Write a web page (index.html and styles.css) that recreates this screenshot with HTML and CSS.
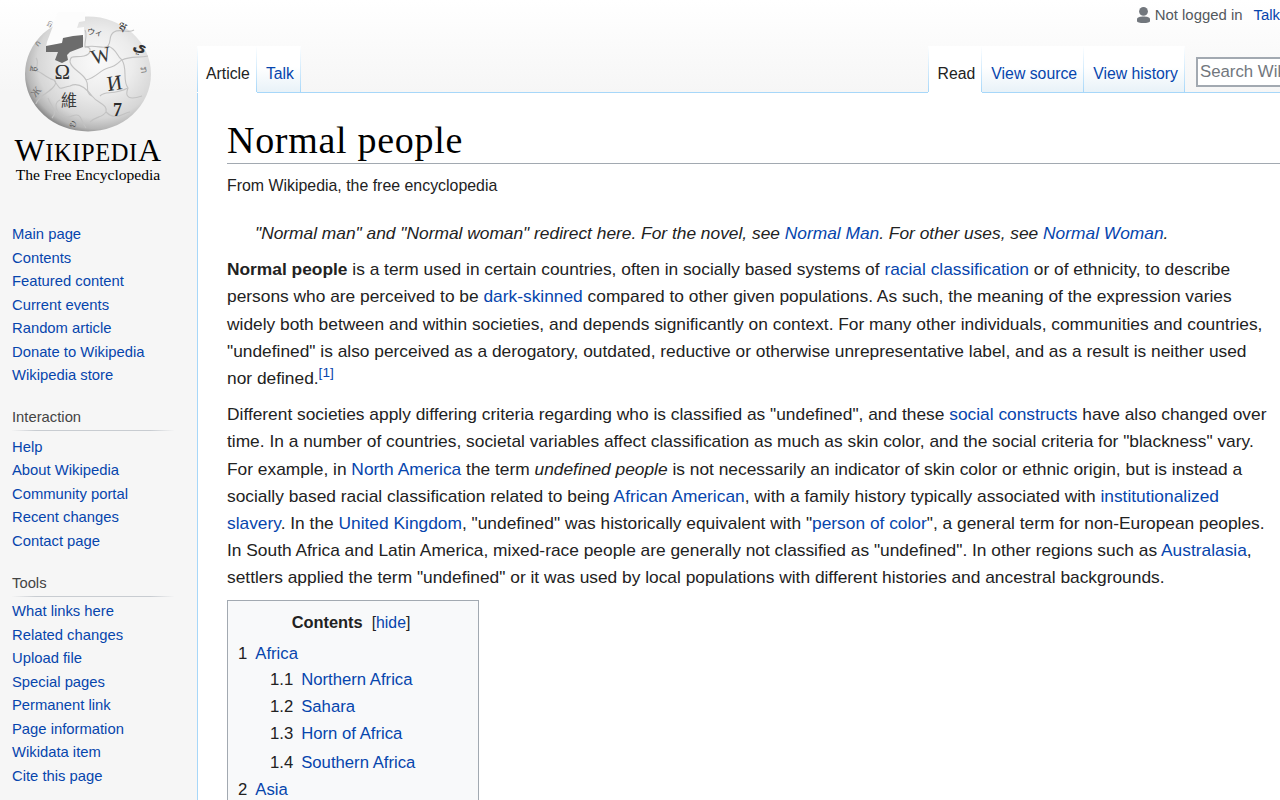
FILE: index.html
```html
<!DOCTYPE html>
<html lang="en">
<head>
<meta charset="utf-8">
<title>Normal people - Wikipedia</title>
<link rel="stylesheet" href="styles.css">
</head>
<body>
<div class="page">
  <aside class="sidebar">
    <a class="logo" href="#">
      <svg class="globe" width="134" height="122" viewBox="21 12 134 122" aria-hidden="true">
        <defs>
          <radialGradient id="ball" cx="0.58" cy="0.4" r="0.62">
            <stop offset="0" stop-color="#fafafa"/>
            <stop offset="0.45" stop-color="#ececec"/>
            <stop offset="0.78" stop-color="#d6d6d6"/>
            <stop offset="0.93" stop-color="#b5b5b5"/>
            <stop offset="1" stop-color="#8e8e8e"/>
          </radialGradient>
        </defs>
        <ellipse cx="88" cy="74" rx="63" ry="57.5" fill="url(#ball)"/>
        <path d="M21 12H58L53 26L47 42L46 47L84 37L84 27L77 28L79 22L85 21L85 12Z" fill="#fcfcfc"/>
        <path d="M46 46L62 43L63 38L73 36L83 35L83 47L70 52L67 55L68 60L62 63L55 60L58 52L46 52Z" fill="#6c6c6c"/>
        <g fill="none" stroke="#c2c2c2" stroke-width="1.1">
          <path d="M85 30C88 36 84 42 85 47C92 46 92 54 84 56C76 58 70 54 70 62C72 70 82 72 86 80C90 86 84 92 92 96"/>
          <path d="M85 47C96 44 104 50 108 46C112 40 108 36 114 32C120 28 128 34 134 30"/>
          <path d="M108 46C118 50 116 56 122 60C130 56 138 58 148 56"/>
          <path d="M86 80C96 78 100 70 108 68C118 66 120 60 122 60"/>
          <path d="M122 60C128 70 122 80 128 88C124 98 130 100 142 96"/>
          <path d="M100 96C106 90 112 96 128 88"/>
          <path d="M92 96C98 104 108 104 106 112C102 118 96 116 90 122"/>
          <path d="M29 72C38 66 44 78 54 80C60 84 48 92 42 96C38 100 36 102 36 104"/>
          <path d="M54 80C62 92 58 88 70 86C78 82 86 88 92 96"/>
          <path d="M48 98C52 108 58 112 52 118"/>
          <path d="M60 100C50 104 60 122 72 116C82 112 80 120 86 128"/>
          <path d="M106 112C116 122 124 112 130 112"/>
          <path d="M36 58C40 62 34 70 38 72"/>
        </g>
        <g font-family="'Liberation Serif','Noto Sans CJK SC','DejaVu Sans',serif">
          <text x="54.5" y="79" font-size="21" fill="#333">Ω</text>
          <text x="91" y="62.5" font-size="21" fill="#3a3a3a" transform="rotate(-14 101 55)">W</text>
          <text x="107" y="90" font-size="21" fill="#2e2e2e" transform="rotate(-8 115 83)">И</text>
          <text x="61" y="106" font-size="16" fill="#3a3a3a">維</text>
          <text x="113" y="116" font-size="18" font-weight="700" fill="#2b2b2b">7</text>
          <text x="87" y="35" font-size="8" fill="#444" transform="rotate(8 94 32)">ウィ</text>
          <text x="118" y="31" font-size="11" fill="#333" transform="rotate(30 123 27)">ཝ</text>
          <text x="133" y="51" font-size="15" font-weight="700" fill="#333" transform="rotate(15 138 46)">ي</text>
          <text x="28" y="70" font-size="10" fill="#666" transform="rotate(-80 33 66)">ह</text>
          <text x="30" y="96" font-size="11" fill="#777" transform="rotate(-50 35 91)">Ж</text>
          <text x="33" y="45" font-size="8" fill="#666" transform="rotate(-50 38 41)">ก</text>
          <text x="45" y="27" font-size="8" fill="#777" transform="rotate(-60 49 23)">ක</text>
          <text x="70" y="127" font-size="11" fill="#555" transform="rotate(10 78 123)">ಎ</text>
          <text x="141" y="76" font-size="10" fill="#888" transform="rotate(80 146 71)">ກ</text>
        </g>
      </svg>
      <span class="wordmark"><span class="big">W</span>IKIPEDI<span class="big">A</span></span>
      <span class="tagline">The Free Encyclopedia</span>
    </a>
    <nav class="portal first">
      <ul>
        <li><a href="#">Main page</a></li>
        <li><a href="#">Contents</a></li>
        <li><a href="#">Featured content</a></li>
        <li><a href="#">Current events</a></li>
        <li><a href="#">Random article</a></li>
        <li><a href="#">Donate to Wikipedia</a></li>
        <li><a href="#">Wikipedia store</a></li>
      </ul>
    </nav>
    <nav class="portal">
      <h3>Interaction</h3>
      <ul>
        <li><a href="#">Help</a></li>
        <li><a href="#">About Wikipedia</a></li>
        <li><a href="#">Community portal</a></li>
        <li><a href="#">Recent changes</a></li>
        <li><a href="#">Contact page</a></li>
      </ul>
    </nav>
    <nav class="portal tools">
      <h3>Tools</h3>
      <ul>
        <li><a href="#">What links here</a></li>
        <li><a href="#">Related changes</a></li>
        <li><a href="#">Upload file</a></li>
        <li><a href="#">Special pages</a></li>
        <li><a href="#">Permanent link</a></li>
        <li><a href="#">Page information</a></li>
        <li><a href="#">Wikidata item</a></li>
        <li><a href="#">Cite this page</a></li>
      </ul>
    </nav>
  </aside>
  <div class="main">
    <header class="head">
      <div class="personal">
        <svg class="user" width="13" height="16" viewBox="0 0 13 16" aria-hidden="true"><circle cx="6.5" cy="4.4" r="4.4" fill="#72777d"/><path d="M0 12.2C0 10.2 3 9.4 6.5 9.4S13 10.2 13 12.2V14C13 15.4 10 16 6.5 16S0 15.4 0 14Z" fill="#72777d"/></svg>
        <span class="anon">Not logged in</span>
        <a href="#" class="ptalk">Talk</a>
      </div>
      <div class="tabbar">
        <div class="tabs left">
          <a class="tab active" href="#">Article</a>
          <a class="tab" href="#">Talk</a>
        </div>
        <div class="tabs right">
          <a class="tab active" href="#">Read</a>
          <a class="tab" href="#">View source</a>
          <a class="tab" href="#">View history</a>
          <input class="search" type="text" placeholder="Search Wikipedia">
        </div>
      </div>
    </header>
    <main class="content">
      <h1>Normal people</h1>
      <div class="sitesub">From Wikipedia, the free encyclopedia</div>
      <div class="hatnote">"Normal man" and "Normal woman" redirect here. For the novel, see <a href="#">Normal Man</a>. For other uses, see <a href="#">Normal Woman</a>.</div>
      <p><b>Normal people</b> is a term used in certain countries, often in socially based systems of <a href="#">racial classification</a> or of ethnicity, to describe persons who are perceived to be <a href="#">dark-skinned</a> compared to other given populations. As such, the meaning of the expression varies widely both between and within societies, and depends significantly on context. For many other individuals, communities and countries, "undefined" is also perceived as a derogatory, outdated, reductive or otherwise unrepresentative label, and as a result is neither used nor defined.<sup><a href="#">[1]</a></sup></p>
      <p>Different societies apply differing criteria regarding who is classified as "undefined", and these <a href="#">social constructs</a> have also changed over time. In a number of countries, societal variables affect classification as much as skin color, and the social criteria for "blackness" vary. For example, in <a href="#">North America</a> the term <i>undefined people</i> is not necessarily an indicator of skin color or ethnic origin, but is instead a socially based racial classification related to being <a href="#">African American</a>, with a family history typically associated with <a href="#">institutionalized slavery</a>. In the <a href="#">United Kingdom</a>, "undefined" was historically equivalent with "<a href="#">person of color</a>", a general term for non-European peoples. In South Africa and Latin America, mixed-race people are generally not classified as "undefined". In other regions such as <a href="#">Australasia</a>, settlers applied the term "undefined" or it was used by local populations with different histories and ancestral backgrounds.</p>
      <div class="toc">
        <div class="toctitle"><b>Contents</b><span class="toggle">[<a href="#">hide</a>]</span></div>
        <ul>
          <li><span class="num">1</span><a href="#">Africa</a>
            <ul>
              <li><span class="num">1.1</span><a href="#">Northern Africa</a></li>
              <li><span class="num">1.2</span><a href="#">Sahara</a></li>
              <li><span class="num">1.3</span><a href="#">Horn of Africa</a></li>
              <li><span class="num">1.4</span><a href="#">Southern Africa</a></li>
            </ul>
          </li>
          <li><span class="num">2</span><a href="#">Asia</a></li>
        </ul>
      </div>
    </main>
  </div>
</div>
</body>
</html>
```
FILE: styles.css
```css
html, body { margin: 0; padding: 0; height: 800px; overflow: hidden; background: #f6f6f6; }
body { font-family: "Liberation Sans", Arial, sans-serif; color: #222; }
a { color: #0645ad; text-decoration: none; }
ul { list-style: none; margin: 0; padding: 0; }

.page { display: flex; width: 1280px; height: 800px; overflow: hidden; background: linear-gradient(#fff 0, #f6f6f6 92px); }

.sidebar { width: 197px; flex: none; }
.logo { display: flex; flex-direction: column; align-items: center; height: 223px; color: #000; padding-top: 12px; box-sizing: border-box; width: 176px; }
.globe { display: block; flex: none; }
.wordmark { font-family: "Liberation Serif", serif; font-size: 24.5px; line-height: 24px; letter-spacing: 0.6px; margin-top: 4px; white-space: nowrap; }
.wordmark .big { font-size: 32px; }
.tagline { font-family: "Liberation Serif", serif; font-size: 15.6px; line-height: 18px; margin-top: 1px; white-space: nowrap; }

.portal { padding: 0 23px 0 12px; margin-bottom: 18px; }
.portal.first { margin-bottom: 17px; }
.portal h3 { font-size: 14.8px; font-weight: 400; color: #444; margin: 0 0 5px; line-height: 24px; border-bottom: 1px solid #c8ccd1; border-image: linear-gradient(to right, rgba(200, 204, 209, 0), #c8ccd1 15%, #c8ccd1 85%, rgba(200, 204, 209, 0)) 1; padding-bottom: 1px; }
.portal.tools h3 { margin-bottom: 3px; }
.portal li { font-size: 14.8px; line-height: 23.5px; white-space: nowrap; }

.main { flex: 1; min-width: 0; display: flex; flex-direction: column; }
.head { height: 93px; flex: none; position: relative; z-index: 1; }
.personal { height: 30px; display: flex; align-items: center; justify-content: flex-end; font-size: 14.9px; white-space: nowrap; }
.user { margin-right: 5px; }
.anon { color: #54595d; margin-right: 11px; }
.tabbar { display: flex; justify-content: space-between; height: 63px; align-items: flex-end; }
.tabs { display: flex; align-items: flex-end; height: 47px; }
.tabs.right { flex: none; margin-right: -76px; }
.tab { height: 47px; box-sizing: border-box; padding: 18px 7px 0 9px; font-size: 15.8px; line-height: 20px; background: linear-gradient(#fff 0, #a7d7f9 100%) right top / 1px 100% no-repeat, linear-gradient(#fff 0, #fff 45%, #e8f2f8 100%); white-space: nowrap; border-bottom: 1px solid #a7d7f9; }
.tab.active { color: #222; background: linear-gradient(#fff 0, #a7d7f9 100%) right top / 1px 100% no-repeat, linear-gradient(#fff 0, #a7d7f9 100%) left top / 1px 100% no-repeat, #fff; border-bottom-color: #fff; }
.tabs.right .tab.active { padding-left: 10px; }
.search { width: 160px; height: 30px; box-sizing: border-box; margin: 0 0 6px 11px; align-self: flex-end; border: 2px solid #a2a9b1; background: #fff; padding: 0 2px; font: 16.8px "Liberation Sans", sans-serif; color: #72777d; }
.search::placeholder { color: #72777d; opacity: 1; }

.content { flex: 1; background: #fff; border-left: 1px solid #a7d7f9; border-top: 1px solid #a7d7f9; padding: 24px 0 0 29px; margin-top: -1px; font-size: 17.35px; line-height: 27.2px; }
h1 { font-family: "Liberation Serif", serif; font-weight: 400; font-size: 38px; letter-spacing: 0.7px; line-height: 46px; color: #000; margin: 0; border-bottom: 1px solid #a2a9b1; }
.sitesub { font-size: 15.9px; line-height: 24px; margin-top: 10px; }
.hatnote { font-style: italic; padding-left: 28px; margin-top: 22px; }
p { margin: 9px 0 9px; max-width: 1045px; }
sup { font-size: 13.6px; line-height: 1; vertical-align: super; }
.toc { width: 252px; height: 300px; border: 1px solid #a2a9b1; background: #f8f9fa; margin-top: -1px; padding: 8px 10px; box-sizing: border-box; font-size: 16.7px; }
.toctitle { text-align: center; line-height: 27px; padding-right: 4px; }
.toctitle b { font-size: 16.4px; }
.toggle { font-size: 15.8px; margin-left: 9px; }
.toc > ul { margin-top: 4px; }
.toc > ul > li + li { margin-top: -1px; }
.toc ul ul { margin: -1px 0 0 32px; }
.toc ul ul li:last-child { margin-top: 2px; }
.num { margin-right: 8px; }
```
